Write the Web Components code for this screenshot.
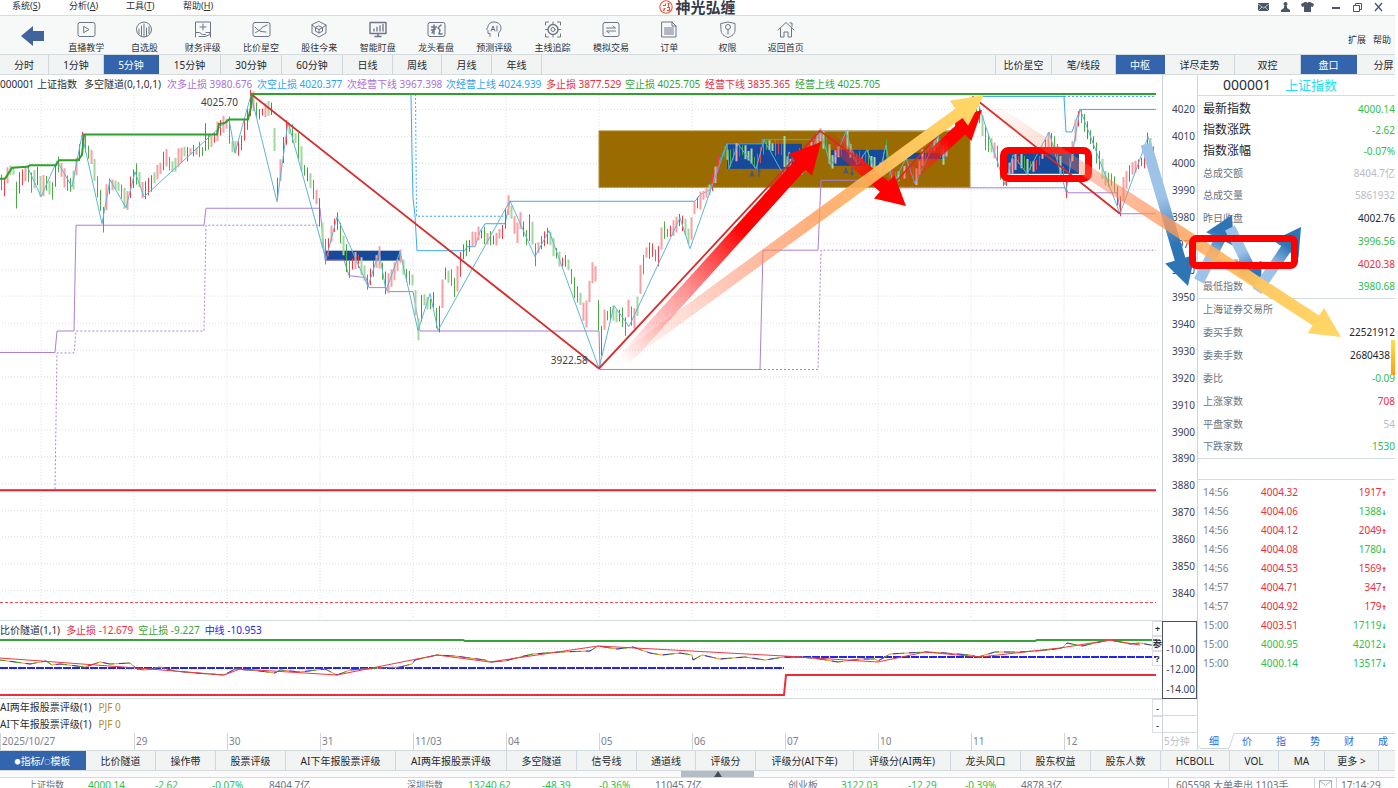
<!DOCTYPE html>
<html lang="zh-CN">
<head>
<meta charset="utf-8">
<title>神光弘缠</title>
<style>
html, body { margin: 0; height: 100%; background: #fff; overflow: hidden; }
body { font: 10px/14px "Noto Sans", "Noto Sans CJK SC", sans-serif; color: #2a2e35; }
</style>
</head>
<body>
<trading-app></trading-app>
<script>
const RESET = `*{box-sizing:border-box}button{font:inherit;color:inherit;background:none;border:0;padding:0;margin:0;cursor:pointer;white-space:nowrap}a{color:inherit;text-decoration:none}svg{display:block}`;

function define(name, css, html, after) {
  const tpl = document.createElement('template');
  tpl.innerHTML = `<style>${RESET}${css}</style>${html}`;
  customElements.define(name, class extends HTMLElement {
    constructor() {
      super();
      this.attachShadow({ mode: 'open' }).append(tpl.content.cloneNode(true));
    }
    connectedCallback() { if (after) after(this.shadowRoot, this); }
  });
}

/* ---------- small building blocks ---------- */
define('ui-tab', `
  :host{display:block;flex:0 0 auto;border-right:1px solid #cfd6db;color:#23272c}
  :host([active]){background:#3465ac;color:#fff;border-right-color:#3465ac}
  button{width:100%;height:100%;display:block;text-align:center}`,
  `<button type="button"><slot></slot></button>`);

const ICONS = {
  live: '<rect x="2" y="2.500" width="17" height="14" rx="2"/><path d="M8 6.500l5 3-5 3z"/>',
  fav: '<circle cx="10" cy="9.500" r="7.500"/><path d="M5 9v5M7.500 6v9.500M10 4v12.500M12.500 8v8M15 6.500v7"/>',
  finance: '<path d="M2.500 11V2h15v9M10 4v6M7 7h6M2.500 11v6M2.500 12.500h4l3 2h3M6 16.500h6l5-2v-2h-4"/><path d="M17.500 11v6"/>',
  star: '<rect x="2" y="2.500" width="17" height="14" rx="2"/><path d="M4.500 12.500c3-1 4-3 6-4M4 7l3 3 3 1.500 5 .5M11 7.500L16 5"/>',
  cube: '<path d="M10 1.500l7 3.500v8l-7 4-7-4V5z"/><path d="M10 6l3.500 1.700v3.500L10 13l-3.500-1.800V7.700zM10 9.500V13M6.500 7.700L10 9.500l3.500-1.800M3 5l3.500 2.700M17 5l-3.500 2.700"/>',
  monitor: '<path d="M2 2.500h16v11H2zM7 16.500h6M10 13.500v3" stroke-width="1.400"/><path d="M6 9v2M9 7.500V11M12 6v5M15 4.500V11" stroke-width="1.300"/>',
  dragon: '<rect x="2" y="2.500" width="17" height="14" rx="2"/><path d="M8 5v9M5.500 7h5M5.500 10l4-1M6 13l2-3M15 5l-3 3 2 2-1 4 3 0" stroke-width="1.400"/>',
  ai: '<path d="M6 16.500v-3H4v-3L2.500 9 4 7C4 3.500 7 2 10 2c4.500 0 7 3 7 6 0 2.500-1.500 4-2.500 5v3.500"/><path d="M7 11l2-5 2 5M7.700 9.500h2.600M13 6v5"/>',
  target: '<circle cx="10" cy="9.500" r="5" stroke-width="1.400"/><circle cx="10" cy="9.500" r="2"/><path d="M2.500 5V2h3M14.500 2h3v3M17.500 14v3h-3M5.500 17h-3v-3M10 2v2M10 15v2M2.500 9.500h2M15.500 9.500h2"/>',
  swap: '<rect x="2" y="2.500" width="16" height="14" rx="2"/><path d="M5.500 8h9l-2.500-2M14.500 11h-9l2.500 2"/>',
  order: '<path d="M3 2h10l4 4v11H3zM13 2v4h4M5.500 8h9M5.500 10h9M5.500 12h9M5.500 14h9"/>',
  right: '<path d="M3 3.500l7-1.500 7 1.500V10c0 4-3 6-7 7.500C6 16 3 14 3 10z"/><circle cx="10" cy="7" r="2.500"/><path d="M10 9.500V14"/>',
  home: '<path d="M2 10l8-7.500 8 7.500M4.500 8.500V17h3.500v-5h4v5h3.500V8.500M14 3h2v3.500"/>'
};

define('tool-item', `
  :host{display:block;min-width:0}
  button{width:100%;display:flex;flex-direction:column;align-items:center;font-size:9px;line-height:14px;color:#2c323b}
  svg{width:20px;height:20px;margin-bottom:1px;fill:none;stroke:#6d7585;stroke-width:1;stroke-linejoin:round;stroke-linecap:round}`,
  `<button type="button"><svg viewBox="0 0 20 20" aria-hidden="true"></svg><slot></slot></button>`,
  (root, host) => { root.querySelector('svg').innerHTML = ICONS[host.getAttribute('icon')]; });

/* ---------- title and menu row ---------- */
define('menu-bar', `
  :host{display:grid;grid-template-columns:1fr auto 1fr;height:15px;line-height:12px;font-size:9px;background:#fff}
  nav{display:flex;padding-left:12px}
  nav button{width:57px;height:12px;text-align:left;line-height:12px}
  h1{margin:0;display:flex;gap:2px;font-size:15px;line-height:14px;font-weight:700;color:#333a48;align-items:flex-start}
  .win{display:flex;justify-content:flex-end;gap:9px;padding-right:9px}
  .win button{height:14px;width:13px}
  .win svg{width:13px;height:14px;fill:#4c5566;stroke:none}
  .win .g{margin-right:6px}`,
  `<nav aria-label="主菜单"><button>系统(<u>S</u>)</button><button>分析(<u>A</u>)</button><button>工具(<u>T</u>)</button><button>帮助(<u>H</u>)</button></nav>
  <h1><svg width="14" height="14" viewBox="0 0 14 14" fill="none" stroke="#f0543c" stroke-width="1.100"><circle cx="7" cy="7" r="6.200"/><path d="M4 5.500h2.500V3.500M4 11l2.500-3M8.500 3.500h2M9.500 3.500v4M8 7.500h2.500v3H8M5 8v3"/></svg>神光弘缠</h1>
  <div class="win">
  <button aria-label="邮件"><svg viewBox="0 0 13 14"><path d="M1 3h11v8H1z"/><path d="M1 4l5.500 4L12 4M1 11l4-4M12 11L8 7" stroke="#fff" fill="none" stroke-width=".6"/></svg></button>
  <button aria-label="用户"><svg viewBox="0 0 13 14"><circle cx="6.500" cy="4" r="2"/><path d="M5 6h3v2l3 2v2H2v-2l3-2z"/></svg></button>
  <button aria-label="皮肤" class="g"><svg viewBox="0 0 13 14"><path d="M4 2h1.500l1 1 1-1H9l4 2-1 3-2-.5V12H3V6.500L1 7 0 4z"/></svg></button>
  <button aria-label="最小化"><svg viewBox="0 0 13 14"><path d="M3 7h8v2H3z"/></svg></button>
  <button aria-label="还原"><svg viewBox="0 0 13 14"><path d="M2.500 5.500h6v6h-6zM4.500 5V3.500h6v6H9" fill="none" stroke="#4c5566"/></svg></button>
  <button aria-label="关闭"><svg viewBox="0 0 13 14"><path d="M2 3l7 8M9 3l-7 8" stroke="#4c5566" stroke-width="1.300"/></svg></button></div>`);

/* ---------- toolbar ---------- */
define('tool-bar', `
  :host{display:flex;height:39px;background:#f7f9f9;border-top:1px solid #d5dde0}
  .back{width:57px;height:38px;padding-left:21px;padding-top:2px}
  .items{flex:0 1 758px;display:grid;grid-template-columns:repeat(13,minmax(0,1fr));padding-top:4px}
  .more{margin-left:auto;display:flex;gap:7px;font-size:9px;align-items:center;padding:9px 4px 0 0}`,
  `<button class="back" aria-label="后退"><svg width="24" height="20" viewBox="0 0 24 20"><path d="M0 10L12 0v5h11v10H12v5z" fill="#3f659c"/></svg></button>
  <div class="items">
  <tool-item icon="live">直播教学</tool-item><tool-item icon="fav">自选股</tool-item><tool-item icon="finance">财务评级</tool-item><tool-item icon="star">比价星空</tool-item><tool-item icon="cube">股往今来</tool-item><tool-item icon="monitor">智能盯盘</tool-item><tool-item icon="dragon">龙头看盘</tool-item><tool-item icon="ai">预测评级</tool-item><tool-item icon="target">主线追踪</tool-item><tool-item icon="swap">模拟交易</tool-item><tool-item icon="order">订单</tool-item><tool-item icon="right">权限</tool-item><tool-item icon="home">返回首页</tool-item></div>
  <div class="more"><button>扩展</button><button>帮助</button></div>`);

const tabs = list => list.map(([t, w, a]) => `<ui-tab style="width:${w}px"${a ? ' active' : ''}>${t}</ui-tab>`).join('');

define('period-bar', `
  :host{display:flex;justify-content:space-between;height:21px;background:#f2f4f4;border:solid #d5dce0;border-width:1px 0;line-height:20px}
  div{display:flex}
  .r{border-left:1px solid #cfd6db}
  .r ui-tab:last-child{border:0}`,
  `<div>${tabs([['分时',49],['1分钟',55],['5分钟',55,1],['15分钟',62],['30分钟',61],['60分钟',61],['日线',50],['周线',49],['月线',50],['年线',50]])}</div>
  <div class="r">${tabs([['比价星空',56],['笔/线段',64],['中枢',49,1],['详尽走势',70],['双控',66],['盘口',56,1],['&emsp;&ensp;分屏',38]])}</div>`);

/* ---------- price chart ---------- */
const PRICE_PATH = '0,182 3,190 8,172 13,172 16,195 20,180 27,170 32,185 38,172 41,193 45,180 53,193 57,163 65,180 72,185 77,160 82,140 90,155 95,175 100,200 103,220 107,190 110,183 120,188 126,205 135,170 143,192 150,185 158,172 165,155 172,168 180,155 195,150 203,150 205,138 210,145 219,127 228,122 231,145 236,150 240,145 248,115 251,98 257,113 262,112 270,108 273,115 276,195 282,155 287,125 297,140 302,165 310,180 318,203 322,235 326,257 332,230 337,220 341,240 345,250 348,270 352,265 358,260 368,283 378,255 386,288 395,268 400,258 406,275 412,280 418,328 422,300 428,305 433,300 438,328 444,275 450,275 455,290 462,255 465,250 473,240 480,232 487,238 495,240 503,230 508,205 512,215 516,235 520,220 527,240 530,222 535,255 540,245 549,235 553,248 560,260 568,265 575,290 580,300 585,320 588,300 592,273 597,272 599,360 602,330 605,315 610,315 615,315 620,315 625,325 628,310 633,322 637,305 640,280 645,255 652,250 657,260 663,230 668,235 673,230 680,220 686,230 690,245 692,212 700,200 710,190 716,170 722,150 730,160 738,148 750,155 756,165 765,145 775,150 783,145 785,160 790,165 800,155 810,150 820,135 828,150 832,160 840,150 846,137 852,155 862,160 867,155 878,175 882,165 886,150 890,175 900,175 910,170 915,180 925,150 938,140 942,160 948,140 958,125 972,105 980,118 985,140 995,150 1000,170 1005,182 1012,165 1020,160 1028,168 1035,165 1045,150 1049,138 1056,150 1062,170 1066,185 1070,165 1075,130 1080,113 1085,125 1092,140 1100,165 1105,180 1112,180 1120,205 1124,185 1130,170 1135,165 1143,160 1147,143 1151,150 1155,155';

function candles() {
  const pts = PRICE_PATH.split(' ').map(p => p.split(',').map(Number));
  const up = ['#f03c44', '#f9a0a4'], down = ['#4bab45', '#a3d79d'];
  const d = Object.fromEntries([...up, ...down].map(c => [c, '']));
  let seed = 11, i = 0;
  const rnd = () => (seed = (seed * 16807) % 2147483647) / 2147483647;
  for (let x = 1; x < 1156; x += 3) {
    while (pts[i + 1][0] < x) i++;
    const [ax, ay] = pts[i], [bx, by] = pts[i + 1];
    const slope = Math.max(-9, Math.min(9, (by - ay) / (bx - ax)));
    const y = ay + (by - ay) / (bx - ax) * (x - ax) + (rnd() - .5) * 4;
    const h = 3 + rnd() * 5 + Math.min(8, Math.abs(slope));
    const rising = rnd() < (slope < 0 ? .88 : .2);
    const c = (rising ? up : down)[rnd() < .55 ? 0 : 1];
    d[c] += `M${x + .5} ${(y - h).toFixed(1)}V${(y + h).toFixed(1)}`;
  }
  return Object.entries(d).map(([c, p], k) => `<path d="${p}" stroke="${c}" stroke-width="${k % 2 ? 2 : 1}"/>`).join('');
}
const DAYS = [41, 134, 227, 320, 413, 506, 599, 692, 785, 878, 971, 1064];
const grid = (ys, a, b) =>
  ys.map(y => `<path d="M2 ${y}H1160"/>`).join('') + DAYS.map(x => `<path d="M${x} ${a}V${b}"/>`).join('');
const levels = Array.from({ length: 19 }, (_, k) => Math.round(109 + k * 26.78) + .5);

define('price-chart', `
  :host{display:block;position:relative;flex:1 1 546px;min-height:0;overflow:hidden}
  svg{position:absolute;inset:0;width:100%;height:100%;fill:none}
  .info{position:relative;display:grid;grid-template-columns:84px 83px 90px 90px 99px 100px 79px 80px 90px auto;height:18px;line-height:18px;white-space:nowrap}
  .tag{position:absolute;line-height:12px;color:#3c4048}
  .hi{left:17.3%;top:21px}.lo{left:47.4%;top:279px}`,
  `<svg viewBox="0 75 1162 546" preserveAspectRatio="none">
  <g stroke="#dcdfe2" stroke-dasharray="1 2">${grid(levels, 95, 620)}</g>
  <rect x="599" y="131" width="371" height="56.500" fill="#996b00" stroke="#b08f40"/>
  <g fill="#17499a"><rect x="326" y="251" width="75" height="10"/><rect x="727" y="144" width="75" height="25"/><rect x="831" y="150" width="55" height="16"/><rect x="906" y="153" width="39" height="6"/><rect x="1007" y="154" width="72" height="20"/></g>
  <g stroke="#44598a" stroke-width="1.400"><path d="M750 177l2-5 2 5M751 175.500h2M759 177v-7M757.500 172l1.500-2 1.500 2M844 174l2-5 2 5M845 172.500h2M852 168v7M850.500 173l1.500 2 1.500-2"/></g>
  <path stroke="#a97fd8" d="M0 353H55L57 331.500H74L76 225.500H204L206 208.500H320L325 260.500H344L349 276L366 278L369 288H386L388 292H413L420 331.500H599L600 370H760L763 250.500H818L821 180.500H886L888 188H1066L1068 193H1117L1121 214H1156"/>
  <path stroke="#a97fd8" stroke-dasharray="2 2" d="M55 490L57 353.500H74L76 331.500H204L206 225.500H320M760 370H818L821 250.500H1156"/>
  <path stroke="#3ea8f5" d="M411 94L412 155L413 198L415 216L417 251H465L467 247H475L480 232L485 224H505L510 201.500H695L700 195L710 190L720 160L727 144H762V139.500H821V131.500H970M978 96.500H1064L1066 132H1072L1080 109.500H1156"/>
  <path stroke="#3ea8f5" stroke-dasharray="2 2" d="M415.500 94L416.500 216.500H503M1064 96.500H1156"/>
  ${candles()}
  <path stroke="#5fb4d4" d="M27 166L41 197L57 161L72 187L82 135L102 224L110 180L126 208L135 172L144 197L229 119L235 153L251 95L277 202L288 122L326 260L337 217L368 287L379 252L386 291L400 252L418 331L430 294L438 331L510 201L535 257L549 231L599 369L614 306L629 327L680 218L690 249L727 144L729 169L738 144L756 169L764 140L784 176L789 152L802 175L820 131L831 166L846 132L857 165L867 150L878 180L886 145L893 185L906 158L915 184L938 136L943 158L977 100L1005 185L1013 155L1027 174L1049 132L1066 192L1080 109L1120 214L1148 137L1156 160"/>
  <path stroke="#d92b2b" stroke-width="1.800" d="M251 94L599 369L820 131L893 185L973 97L1120 214"/>
  <path stroke="#2fa02c" stroke-width="2" d="M0 179H5L12 168L27 167L30 165.500H56L59 160.500H78L82 155L84 134.500H217L219 124L225 123L229 119.500H248L251 107L252 94H1156"/>
  <path stroke="#e0202c" stroke-width="2" d="M0 491H1156"/>
  <path stroke="#f04850" stroke-dasharray="3 2" d="M0 603.500H1156"/>
  </svg>
  <div class="info"><span>000001 上证指数</span><span>多空隧道(0,1,0,1)</span>
  <span style="color:#a970d6">次多止损 3980.676</span><span style="color:#2da2f5">次空止损 4020.377</span><span style="color:#a970d6">次经营下线 3967.398</span><span style="color:#2da2f5">次经营上线 4024.939</span><span style="color:#ee2c3a">多止损 3877.529</span><span style="color:#36a435">空止损 4025.705</span><span style="color:#ee2c3a">经营下线 3835.365</span><span style="color:#36a435">经营上线 4025.705</span></div>
  <span class="tag hi">4025.70</span><span class="tag lo">3922.58</span>`);

/* ---------- lower indicator ---------- */
const WAVE = '0,660 30,664 46,661 52,665 60,664 85,667 100,662 110,664 130,663 137,669 145,670 160,667 175,671 195,673 224,675 235,669 260,671 275,673 280,670 300,672 325,669 337,675 350,670 380,668 400,667 412,664 415,660 437,655 455,656 485,660 490,662 505,661 520,657 533,654 560,652 590,651 598,646 617,649 633,647 650,653 662,655 680,653 692,655 693,660 702,655 720,659 745,657 765,660 784,657 800,657 820,659 838,662 860,659 875,659 878,661 890,654 925,652 945,653 970,655 978,657 995,652 1020,652 1048,650 1062,648 1067,643 1082,646 1095,643 1110,640 1130,644 1140,643 1156,646';
define('indicator-chart', `
  :host{display:block;position:relative;flex:0 0 78px;border-top:1px solid #d5dce0;overflow:hidden}
  svg{position:absolute;inset:0;width:100%;height:100%;fill:none}
  .info{position:relative;display:flex;gap:5px;line-height:18px;white-space:nowrap}
  .info span:first-child{margin-right:1px}
  .keys{position:absolute;right:0;top:0;display:grid;grid-template-rows:repeat(3,15px);width:10px}
  .keys button{border:1px solid #d9dfe3;border-right:0;line-height:13px;font-size:9px;font-weight:700;text-align:center}`,
  `<svg viewBox="0 621 1162 77" preserveAspectRatio="none">
  <g stroke="#dcdfe2" stroke-dasharray="1 2">${grid([648.5, 669.5, 689.5], 622, 622)}</g>
  <path stroke="#36a435" stroke-width="2" d="M0 640H463L465 641H1035L1037 640H1156"/>
  <path stroke="#ee2c3a" stroke-width="2" d="M0 695H784L786 675H1156"/>
  <path stroke="#2424f0" stroke-width="2" stroke-dasharray="8 1" d="M0 668H784M785 657H1156"/>
  <polyline stroke="#f58b2c" points="${WAVE}"/>
  <polyline stroke="#2fa02c" stroke-dasharray="5 11" points="${WAVE}"/>
  <polyline stroke="#3030d8" stroke-dasharray="6 10" stroke-dashoffset="6" points="${WAVE}"/>
  <polyline stroke="#f03840" points="0,658 137,668 224,675 240,669 337,675 437,655 490,662 598,646 784,656 878,662 925,652 980,657 1060,648 1110,640 1140,645"/>
  </svg>
  <div class="info"><span>比价隧道(1,1)</span><span style="color:#ee2c3a">多止损 -12.679</span><span style="color:#36a435">空止损 -9.227</span><span style="color:#1c1cf0">中线 -10.953</span></div>
  <div class="keys"><button>+</button><button>参</button><button>?</button></div>`);

define('rating-row', `
  :host{display:flex;justify-content:space-between;flex:0 0 17px;line-height:17px;white-space:nowrap}
  :host(.first){border-top:1px solid #d5dce0}
  b{font-weight:400;color:#b58a2a;margin-left:7px}
  button{width:10px;border:1px solid #d9dfe3;border-right:0;line-height:14px}`,
  `<span><slot></slot><b>PJF 0</b></span><button aria-label="收起">-</button>`);

define('date-axis', `
  :host{display:grid;grid-template-columns:134fr repeat(10,93fr) 98fr;flex:0 0 17px;line-height:17px;color:#7b828c;white-space:nowrap}
  span{border-left:1px solid #cdd5d9;padding-left:1px;min-width:0}
  span:first-child{border:0}`,
  ['2025/10/27','29','30','31','11/03','04','05','06','07','10','11','12'].map(d => `<span>${d}</span>`).join(''));

define('value-axis', `
  :host{display:flex;flex-direction:column;width:35px;flex:none;border-left:1px solid #cdd5d9;color:#3b4354}
  ol{list-style:none;margin:0;padding:21px 0 15px;flex:1 1 546px;display:flex;flex-direction:column;min-height:0}
  ol li{flex:1;display:flex;align-items:center;justify-content:flex-end;padding-right:2px}
  ol.sub{flex:0 0 78px;margin-left:-1px;border:1px solid #4b5266;padding:17px 0 0}
  ol.sub li{flex:0 0 20px;padding-right:1px}
  i{flex:0 0 17px;border-bottom:1px solid #d5dce0}
  p{margin:0;flex:0 0 17px;line-height:17px;color:#b9bfc4;padding-left:1px;white-space:nowrap}`,
  `<ol>${Array.from({ length: 19 }, (_, k) => `<li>${4020 - k * 10}</li>`).join('')}</ol>
  <ol class="sub"><li>-10.00</li><li>-12.00</li><li>-14.00</li></ol><i></i><i></i><p>5分钟</p>`);

/* ---------- quote panel ---------- */
const G = '#2fbe4c', R = '#f02c38', K = '#23272c', W = '#b9bdc2';
const row = ([k, v, c, cls = '']) => `<tr class="${cls}"><th scope="row">${k}</th><td style="color:${c}">${v}</td></tr>`;
const tick = ([t, p, pc, v, u]) => `<tr><td>${t}</td><td style="color:${pc}">${p}</td><td style="color:${u ? R : G}">${v}<i>${u ? '↑' : '↓'}</i></td></tr>`;
define('quote-panel', `
  :host{display:flex;flex-direction:column;flex:0 0 198px;border-left:1px solid #cdd5d9;overflow:hidden;white-space:nowrap}
  h2{margin:0;height:21px;border-bottom:1px solid #d5dce0;font-size:14px;line-height:20px;font-weight:400;padding-left:25px;display:flex;gap:14px;flex:none}
  h2 b{font-weight:400;font-size:13px;color:#1fe0f2}
  table{border-collapse:collapse;width:100%;table-layout:fixed}
  td,th{padding:0;font-weight:400;text-align:left}
  .q{margin-top:2px}
  .q th{padding-left:5px;color:#6c7480;width:85px}
  .q td{text-align:right}
  .q tr{height:23px}
  .q .b{height:21px}.q .b th{font-size:12px;color:#23272c}
  .q .s{height:22px}
  .q .sep{border-top:1px solid #d5dce0}
  .q .e td{padding-right:5px}
  .gap{height:22px;border:solid #d5dce0;border-width:1px 0;margin:1px 0 2px;flex:none}
  .t tr{height:19px}
  .t td:nth-child(1){width:63px;padding-left:5px;color:#7b828c}
  .t td:nth-child(3){text-align:right;padding-right:8px}
  .t i{font:normal 700 9px/12px "DejaVu Sans Mono",monospace}
  nav{margin-top:auto;height:17px;display:grid;grid-template-columns:32px repeat(5,34px);color:#2b6bd8;line-height:17px;position:relative;flex:none}
  nav svg{position:absolute;inset:0}
  nav a{position:relative;text-align:center}`,
  `<h2>000001<b>上证指数</b></h2>
  <table class="q">${[['最新指数','4000.14',G,'b'],['指数涨跌','-2.62',G,'b'],['指数涨幅','-0.07%',G,'b'],['总成交额','8404.7亿',W],['总成交量','5861932',W,'s'],['昨日收盘','4002.76',K],['','3996.56',G],['最高指数','4020.38',R],['最低指数','3980.68',G],['上海证券交易所','',K,'sep s'],['委买手数','22521912',K],['委卖手数','2680438',K,'e'],['委比','-0.09',G],['上涨家数','708',R],['平盘家数','54',W],['下跌家数','1530',G,'s']].map(row).join('')}</table>
  <div class="gap"></div>
  <table class="t">${[['14:56','4004.32',R,'1917',1],['14:56','4004.06',R,'1388',0],['14:56','4004.12',R,'2049',1],['14:56','4004.08',R,'1780',0],['14:56','4004.53',R,'1569',1],['14:57','4004.71',R,'347',1],['14:57','4004.92',R,'179',1],['15:00','4003.51',R,'17119',0],['15:00','4000.95',G,'42012',0],['15:00','4000.14',G,'13517',0]].map(tick).join('')}</table>
  <nav><svg width="202" height="17" viewBox="0 0 202 17" fill="none" stroke="#cdd5d9"><path d="M0 13L3 15.500H31L36 .5H202"/></svg><a href="#">细</a><a href="#">价</a><a href="#">指</a><a href="#">势</a><a href="#">财</a><a href="#">成</a></nav>`);

/* ---------- hand-drawn trend arrows over the workspace ---------- */
let arrowId = 0;
function arrow(x1, y1, x2, y2, w, head, wing, stops) {
  const L = Math.hypot(x2 - x1, y2 - y1), ux = (x2 - x1) / L, uy = (y2 - y1) / L;
  const p = (d, o) => `${(x1 + ux * d - uy * o).toFixed(1)} ${(y1 + uy * d + ux * o).toFixed(1)}`;
  const id = 'g' + arrowId++, b = L - head;
  return `<linearGradient id="${id}" gradientUnits="userSpaceOnUse" x1="${x1}" y1="${y1}" x2="${x2}" y2="${y2}">${stops.map(([o, c, a = 1]) => `<stop offset="${o}" stop-color="${c}" stop-opacity="${a}"/>`).join('')}</linearGradient>
  <path fill="url(#${id})" d="M${p(0, -w / 2)}L${p(b, -w / 2)}L${p(b, -wing / 2)}L${p(L, 0)}L${p(b, wing / 2)}L${p(b, w / 2)}L${p(0, w / 2)}Z"/>`;
}
const red = [[0, '#f00', 0], [.3, '#ff2020', .45], [.6, '#f00', 1], [1, '#f00', 1]];
const gold = [[0, '#ff8060', 0], [.3, '#ff7850', .42], [.55, '#ff9c55', .8], [.78, '#ffc860', .98], [1, '#ffd966']];
const blue = [[0, '#9dc3e8'], [.38, '#9dc3e8'], [.7, '#2e75b6'], [1, '#2e75b6']];
define('trend-overlay', `:host{display:block;position:absolute;inset:0;pointer-events:none}svg{width:100%;height:100%}`,
  `<svg viewBox="0 75 1395 675" preserveAspectRatio="none">
  ${arrow(625, 359, 821, 142, 14, 31, 32, red)}
  ${arrow(824, 134, 906, 206, 13, 29, 31, red)}
  ${arrow(900, 186, 982, 110, 13, 29, 31, red)}
  ${arrow(617, 363, 984, 95, 12, 31, 31, gold)}
  <rect x="1003.500" y="150.500" width="85" height="28" rx="5" fill="none" stroke="#f00" stroke-width="7"/>
  ${arrow(1146, 144, 1188, 286, 11, 28, 31, blue)}
  ${arrow(1199, 281, 1232, 215, 11, 27, 31, blue)}
  ${arrow(1230, 228, 1261, 291, 11, 27, 28, blue)}
  ${arrow(1257, 291, 1301, 227, 11, 27, 31, blue)}
  ${arrow(985, 105, 1341, 337, 12, 30, 30, gold)}
  <rect x="1192.500" y="238.500" width="102" height="27" rx="4" fill="none" stroke="#f00" stroke-width="7"/>
  <linearGradient id="tab" x2="0" y2="1"><stop stop-color="#ffe04a"/><stop offset="1" stop-color="#ff9c10"/></linearGradient>
  <rect x="1391" y="340" width="4" height="35" fill="url(#tab)"/></svg>`);

define('chart-stage', `
  :host{display:flex;position:relative;flex:1 1 675px;min-height:0}
  .col{flex:1;min-width:0;display:flex;flex-direction:column}`,
  `<div class="col"><price-chart></price-chart><indicator-chart></indicator-chart><rating-row class="first">AI两年报股票评级(1)</rating-row><rating-row>AI下年报股票评级(1)</rating-row><date-axis></date-axis></div>
  <value-axis></value-axis><quote-panel></quote-panel><trend-overlay></trend-overlay>`);

/* ---------- template tabs, drawer handle, status row ---------- */
define('template-bar', `
  :host{display:flex;height:21px;background:#f2f4f4;border:solid #d5dce0;border-width:1px 0;line-height:20px}
  small{font-size:6px;vertical-align:1px}`,
  tabs([['<small>●</small>指标/<small>○</small>模板',86,1],['比价隧道',70],['操作带',60],['股票评级',70],['AI下年报股票评级',110],['AI两年报股票评级',111],['多空隧道',70],['信号线',60],['通道线',59],['评级分',60],['评级分(AI下年)',98],['评级分(AI两年)',97],['龙头风口',70],['股东权益',70],['股东人数',70],['HCBOLL',69],['VOL',49],['MA',46],['更多 &gt;',54]]));

define('drawer-handle', `
  :host{display:flex;justify-content:center;height:6px;background:#fafafa;padding-left:40px}
  button{width:73px;height:6px;background:#b4bdc6;display:grid;place-items:center}`,
  `<button aria-label="展开"><svg width="8" height="6"><path d="M4 0L8 6H0z" fill="#444c58"/></svg></button>`);

define('status-bar', `
  :host{display:grid;height:11px;border-top:1px solid #d5dce0;line-height:14px;white-space:nowrap;color:#6c7480;padding-left:28px;
    grid-template-columns:60fr 67fr 57fr 57fr 138fr 61fr 74fr 57fr 56fr 133fr 53fr 67fr 57fr 56fr 147fr 146fr 22fr 59fr}
  span{min-width:0}
  .g{color:#2fbe4c}.n{font-size:9px}
  .l{border-left:1px solid #cdd5d9;padding-left:7px}
  .m{padding:2px 0 0 4px}.c{padding-left:4px}`,
  `<span class="n">上证指数</span><span class="g">4000.14</span><span class="g">-2.62</span><span class="g">-0.07%</span><span>8404.7亿</span>
  <span class="n">深圳指数</span><span class="g">13240.62</span><span class="g">-48.39</span><span class="g">-0.36%</span><span>11045.7亿</span>
  <span>创业板</span><span class="g">3122.03</span><span class="g">-12.29</span><span class="g">-0.39%</span><span>4878.3亿</span>
  <span class="l">605598 大单卖出 1103手</span><span class="l m"><svg width="14" height="10" fill="none" stroke="#aab1b8"><path d="M.5.5h12v9H.5zM.5.5l6 5 6-5"/></svg></span><span class="l c">17:14:29</span>`);

define('trading-app', `
  :host{display:flex;flex-direction:column;height:100vh;min-height:560px;padding-right:3px;overflow:hidden;background:#fff}
  menu-bar,tool-bar,period-bar,template-bar,drawer-handle,status-bar{flex:none}`,
  `<menu-bar></menu-bar><tool-bar></tool-bar><period-bar></period-bar><chart-stage></chart-stage><template-bar></template-bar><drawer-handle></drawer-handle><status-bar></status-bar>`);
</script>
</body>
</html>
